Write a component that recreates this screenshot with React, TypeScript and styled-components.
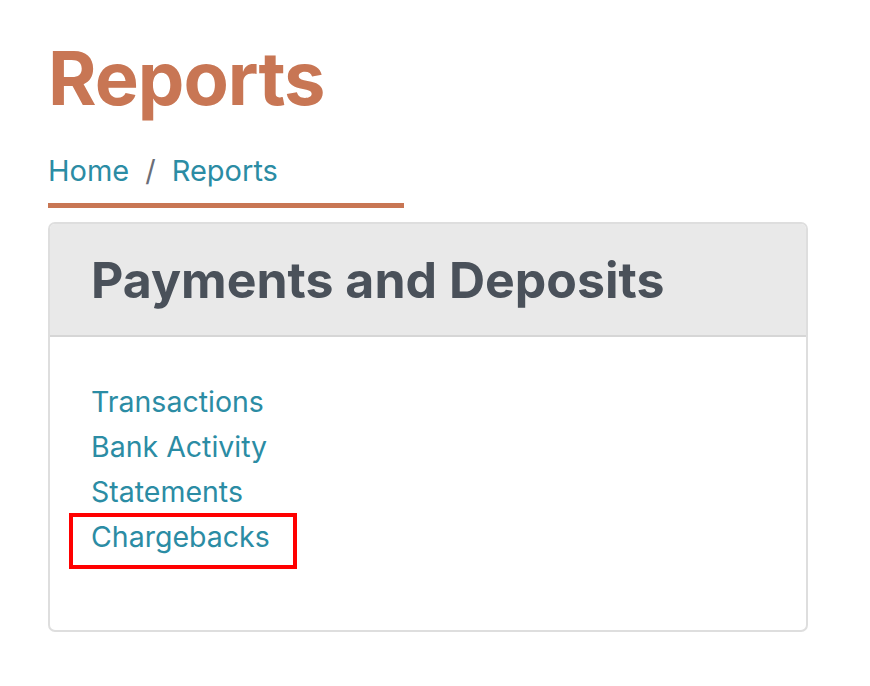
import React from 'react'
import styled, { createGlobalStyle } from 'styled-components'

const GlobalStyle = createGlobalStyle`
  body {
    margin: 0;
    background: #fff;
    font-family: Inter, "Noto Sans", sans-serif;
  }
`

const links = [
  { id: '1', label: 'Transactions' },
  { id: '2', label: 'Bank Activity' },
  { id: '3', label: 'Statements' },
  { id: '4', label: 'Chargebacks', highlighted: true }
]

const App: React.FC = () => {
  return (
    <StyledPage>
      <GlobalStyle />
      <PageTitle>Reports</PageTitle>
      <Breadcrumb>
        <Crumb href='#'>Home</Crumb>
        <Separator>/</Separator>
        <Crumb href='#'>Reports</Crumb>
      </Breadcrumb>
      <Card>
        <CardHeader>
          <CardTitle>Payments and Deposits</CardTitle>
        </CardHeader>
        <CardBody>
          {links.map((link) => (
            <LinkItem key={link.id}>
              <ReportLink href='#' $highlighted={link.highlighted}>
                {link.label}
              </ReportLink>
            </LinkItem>
          ))}
        </CardBody>
      </Card>
    </StyledPage>
  )
}

export default App

const StyledPage = styled.main`
  padding: 28px 0 0 48px;
  width: 760px;
`

const PageTitle = styled.h1`
  margin: 0;
  font-size: 74px;
  line-height: 100px;
  font-weight: 700;
  color: #c87654;
  letter-spacing: -1px;
`

const Breadcrumb = styled.nav`
  display: flex;
  align-items: baseline;
  gap: 16px;
  width: 356px;
  margin-top: 25px;
  padding-bottom: 15px;
  border-bottom: 5px solid #c87654;
  font-size: 29px;
  line-height: 35px;
`

const Crumb = styled.a`
  color: #2b8ca4;
  text-decoration: none;
`

const Separator = styled.span`
  color: #6b6e78;
`

const Card = styled.section`
  margin-top: 14px;
  border: 2px solid #dedede;
  border-radius: 7px;
  overflow: hidden;
`

const CardHeader = styled.header`
  height: 111px;
  display: flex;
  align-items: center;
  padding-left: 41px;
  background: #e9e9e9;
  border-bottom: 2px solid #d6d6d6;
`

const CardTitle = styled.h2`
  margin: 0;
  font-size: 50px;
  font-weight: 700;
  color: #4a515a;
`

const CardBody = styled.ul`
  list-style: none;
  margin: 0;
  padding: 42px 41px 71px;
`

const LinkItem = styled.li`
  font-size: 28.5px;
  line-height: 45px;
`

const ReportLink = styled.a<{ $highlighted?: boolean }>`
  position: relative;
  color: #2b8ca4;
  text-decoration: none;

  ${(p) => p.$highlighted && `
    &::after {
      content: '';
      position: absolute;
      left: -22px;
      right: -27px;
      top: -6px;
      bottom: -15px;
      border: 4px solid #ff0000;
    }
  `}
`
